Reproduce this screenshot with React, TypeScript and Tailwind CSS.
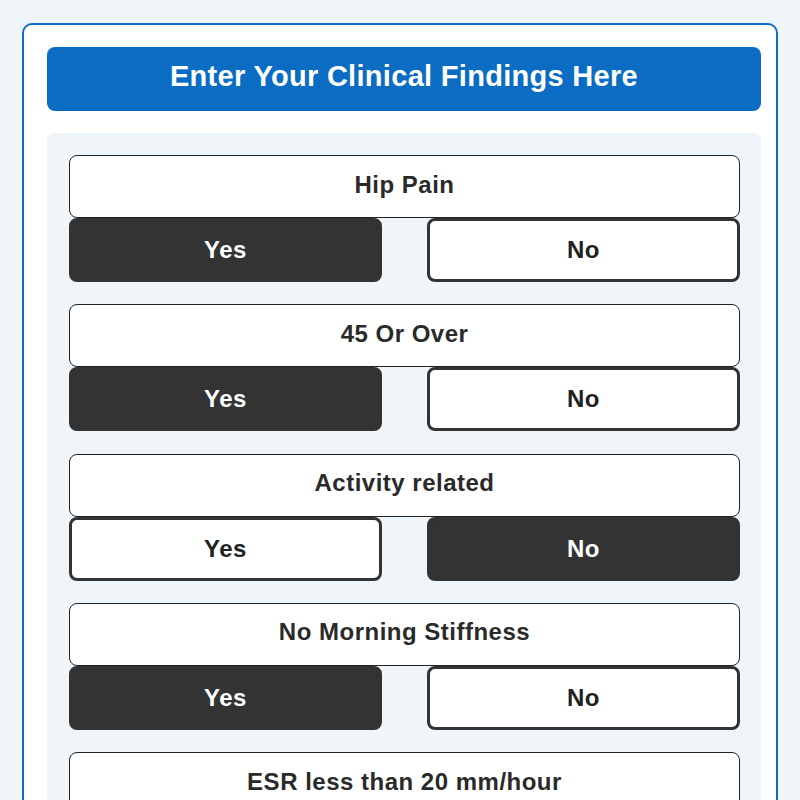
import React, { useState } from "react";

type Finding = { id: string; label: string };

const findings: Finding[] = [
  { id: "hipPain", label: "Hip Pain" },
  { id: "age45", label: "45 Or Over" },
  { id: "activity", label: "Activity related" },
  { id: "stiffness", label: "No Morning Stiffness" },
  { id: "esr", label: "ESR less than 20 mm/hour" },
];

function FindingRow({
  label,
  value,
  onChange,
}: {
  label: string;
  value: boolean | null;
  onChange: (v: boolean) => void;
}) {
  const btn = (active: boolean) =>
    active
      ? "h-[64px] rounded-lg border-[3px] border-[#333333] bg-[#333333] text-white"
      : "h-[64px] rounded-lg border-[3px] border-[#333333] bg-white text-[#222222]";

  return (
    <div className="flex flex-col">
      <div className="flex h-[63px] items-center justify-center rounded-lg border border-[#222222] bg-white pb-[4px] text-[24px] font-bold tracking-[0.5px] text-[#2a2a2a]">
        {label}
      </div>
      <div className="grid grid-cols-2 gap-[45px]">
        <button
          className={`${btn(value === true)} text-[24px] font-bold tracking-[0.5px]`}
          onClick={() => onChange(true)}
        >
          Yes
        </button>
        <button
          className={`${btn(value === false)} text-[24px] font-bold tracking-[0.5px]`}
          onClick={() => onChange(false)}
        >
          No
        </button>
      </div>
    </div>
  );
}

export default function App() {
  const [answers, setAnswers] = useState<Record<string, boolean | null>>({
    hipPain: true,
    age45: true,
    activity: false,
    stiffness: true,
    esr: true,
  });

  return (
    <div
      className="min-h-screen bg-[#f0f5fa] px-[22px] py-[23px]"
      style={{ fontFamily: '"Liberation Sans", Arial, sans-serif' }}
    >
      <div className="rounded-[10px] border-2 border-[#0b6dc8] bg-white pb-[22px] pl-[23px] pr-[15px] pt-[22px]">
        <div className="flex h-[64px] items-center justify-center rounded-lg bg-[#0a6cc2] pb-[4px] text-[29px] font-bold tracking-[0.3px] text-white">
          Enter Your Clinical Findings Here
        </div>

        <div className="mt-[22px] flex flex-col gap-[22.3px] rounded-lg bg-[#f0f5fa] pb-[22px] pl-[22px] pr-[21px] pt-[22px]">
          {findings.map((f) => (
            <FindingRow
              key={f.id}
              label={f.label}
              value={answers[f.id] ?? null}
              onChange={(v) => setAnswers({ ...answers, [f.id]: v })}
            />
          ))}
        </div>
      </div>
    </div>
  );
}
